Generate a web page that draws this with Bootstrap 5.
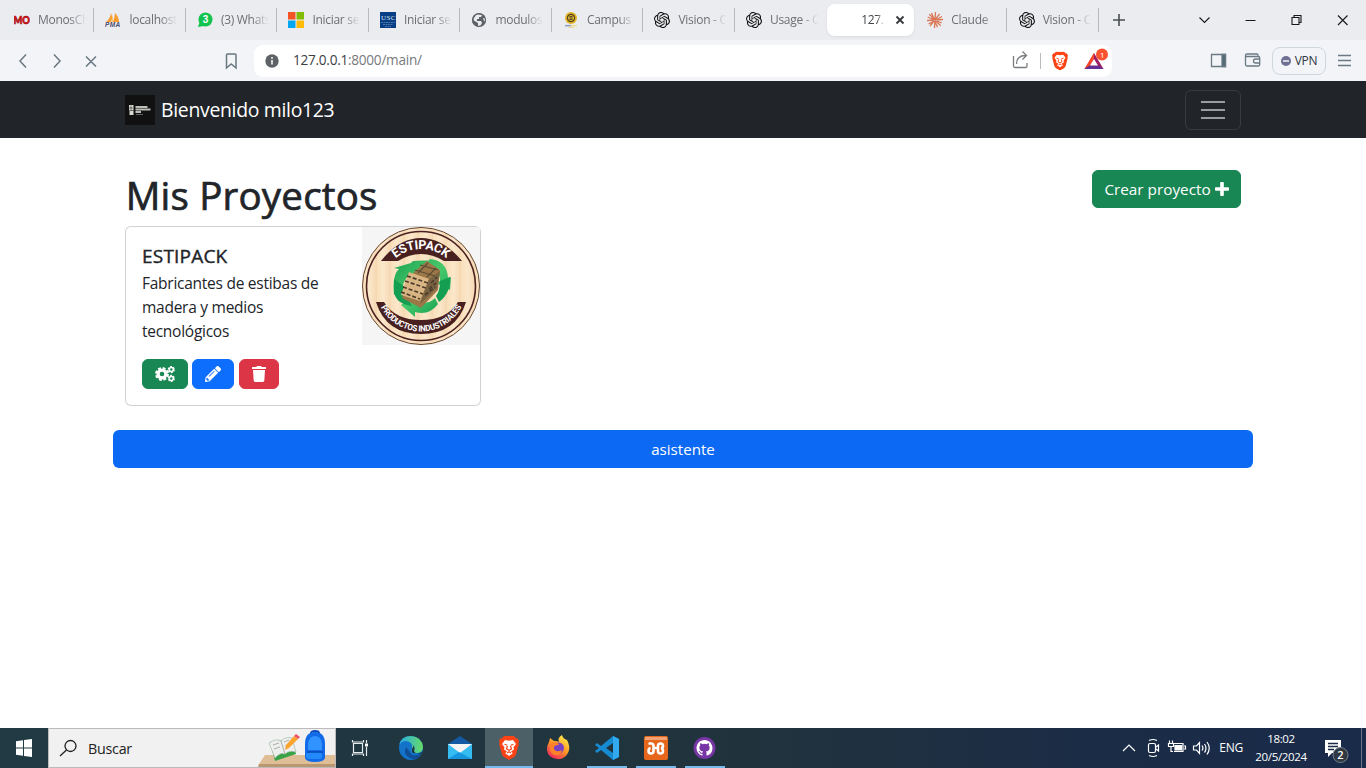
<!DOCTYPE html>
<html lang="es">
<head>
<meta charset="utf-8">
<meta name="viewport" content="width=device-width, initial-scale=1">
<title>Mis Proyectos</title>
<link href="https://cdn.jsdelivr.net/npm/bootstrap@5.3.0/dist/css/bootstrap.min.css" rel="stylesheet">
<script src="https://cdn.jsdelivr.net/npm/bootstrap@5.3.0/dist/js/bootstrap.bundle.min.js" defer></script>
<style>
html,body{height:768px;overflow:hidden}
body{font-family:"Open Sans","Noto Sans",sans-serif;letter-spacing:-.26px}
svg{display:block;flex:none}
.tabstrip{height:40px;background:#ebecf0;padding-left:2.6px}
.tab{flex:none;width:91.5px;height:32px;padding-left:11.4px;font-size:12px;color:#6d6f73;position:relative;letter-spacing:-.3px}
.tab.sep::before{content:"";position:absolute;right:0;top:4px;height:24px;width:1px;background:#b9babd}
.tab .lbl{width:48px;margin-left:8px;overflow:hidden;white-space:nowrap;-webkit-mask-image:linear-gradient(90deg,#000 65%,transparent);mask-image:linear-gradient(90deg,#000 65%,transparent)}
.tab.current{width:87px;margin:0 1.7px 0 1.1px;background:#fff;border-radius:8px;color:#414447;padding-left:34px;box-shadow:0 1px 3px #0001}
.tab.current .lbl{width:24px;margin-left:0}
.toolbar{height:41px;background:#f2f4f7;color:#6a7781}
.address{width:858px;height:32px;background:#fff;border-radius:9px;padding:0 3px 0 10px;font-size:13.6px;color:#777a7d}
.address b{font-weight:400;color:#3c4043}
.addrtext{margin-left:13px}
.vpn{flex:none;width:54px;height:28px;border:1px solid #d0d8de;border-radius:8px;font-size:12px;color:#303443;letter-spacing:-.3px}
.topnav{height:57px;background:#212529}
.topnav .navbar-brand{font-size:19.4px;gap:6px;letter-spacing:-.3px}
.topnav .navbar-toggler{border-color:#383c40;width:56px;height:40px;padding:4px 12px}
.heading{font-size:38.5px;line-height:48px;padding:1px 0 0 .7px;height:48px;letter-spacing:.2px;-webkit-text-stroke:.7px #212529}
.proj{height:180px}
.proj h5{font-size:19px;line-height:24px;letter-spacing:.2px;padding-top:1px;margin-bottom:3px;-webkit-text-stroke:.4px #212529}
.proj p{font-size:15.5px;line-height:24px}
.acts{gap:4.4px}
.ib{height:30px;padding:0 12px}
.create{width:149px;height:38px;font-size:15.3px;gap:4px}
.asis{width:1140px;background:#0b69f3;height:38px;color:#fff;font-size:15.1px}
.desk{height:40px;background:linear-gradient(90deg,#213a43 0,#20333d 55%,#1b2c46 80%,#192b49)}
.find{width:288px;background:#f1f1f1;border:1px solid #bbb;color:#222;font-size:14.3px}
.find span{padding:1px 0 0 1px}
.app{width:48px;height:40px;margin-right:1px;position:relative}
.apps{margin-left:3px}
.app.open::after{content:"";position:absolute;bottom:0;left:4px;width:40px;height:2px;background:#76b9ed}
.app.front{background:#4b6067}.app.front::after{left:0;width:48px}
.tray{color:#fff;font-size:12px}
.eng{margin:0 12px 0 1px}
.clock{width:52px;line-height:18px;text-align:center;font-size:11.5px;letter-spacing:-.35px;white-space:nowrap}
</style>
</head>
<body class="d-flex flex-column bg-white">
<svg width="0" height="0" class="position-absolute">
<defs>
<symbol id="knot" viewBox="0 0 24 24"><path fill="#111" d="M22.2819 9.8211a5.9847 5.9847 0 0 0-.5157-4.9108 6.0462 6.0462 0 0 0-6.5098-2.9A6.0651 6.0651 0 0 0 4.9807 4.1818a5.9847 5.9847 0 0 0-3.9977 2.9 6.0462 6.0462 0 0 0 .7427 7.0966 5.98 5.98 0 0 0 .511 4.9107 6.051 6.051 0 0 0 6.5146 2.9001A5.9847 5.9847 0 0 0 13.2599 24a6.0557 6.0557 0 0 0 5.7718-4.2058 5.9894 5.9894 0 0 0 3.9977-2.9001 6.0557 6.0557 0 0 0-.7475-7.0729zm-9.022 12.6081a4.4755 4.4755 0 0 1-2.8764-1.0408l.1419-.0804 4.7783-2.7582a.7948.7948 0 0 0 .3927-.6813v-6.7369l2.02 1.1686a.071.071 0 0 1 .038.052v5.5826a4.504 4.504 0 0 1-4.4945 4.4944zm-9.6607-4.1254a4.4708 4.4708 0 0 1-.5346-3.0137l.142.0852 4.783 2.7582a.7712.7712 0 0 0 .7806 0l5.8428-3.3685v2.3324a.0804.0804 0 0 1-.0332.0615L9.74 19.9502a4.4992 4.4992 0 0 1-6.1408-1.6464zM2.3408 7.8956a4.485 4.485 0 0 1 2.3655-1.9728V11.6a.7664.7664 0 0 0 .3879.6765l5.8144 3.3543-2.0201 1.1685a.0757.0757 0 0 1-.071 0l-4.8303-2.7865A4.504 4.504 0 0 1 2.3408 7.872zm16.5963 3.8558L13.1038 8.364 15.1192 7.2a.0757.0757 0 0 1 .071 0l4.8303 2.7913a4.4944 4.4944 0 0 1-.6765 8.1042v-5.6772a.79.79 0 0 0-.407-.667zm2.0107-3.0231l-.142-.0852-4.7735-2.7818a.7759.7759 0 0 0-.7854 0L9.409 9.2297V6.8974a.0662.0662 0 0 1 .0284-.0615l4.8303-2.7866a4.4992 4.4992 0 0 1 6.6802 4.66zM8.3065 12.863l-2.02-1.1638a.0804.0804 0 0 1-.038-.0567V6.0742a4.4992 4.4992 0 0 1 7.3757-3.4537l-.142.0805L8.704 5.459a.7948.7948 0 0 0-.3927.6813zm1.0976-2.3654l2.602-1.4998 2.6069 1.4998v2.9994l-2.5974 1.4997-2.6067-1.4997Z"/></symbol>
<symbol id="lion" viewBox="0 0 20 24"><path fill="#fb4316" d="M5 0h10l2.2 2.4 1.4-.2L20 5l-.6 2 .4 1.2L17 18.5q-.6 1.5-2 2.5l-5 3-5-3q-1.400-1-2-2.500L.2 8.200.600 7 0 5l1.400-2.800 1.400.200z"/><path fill="#fff" d="M6 4l4 .8 4-.8 3 4-2.500 3.300.500 2.200-3 2 1.800 1.800L10 20l-3.800-2.700L8 15.500l-3-2 .500-2.200L3 8z"/><path d="M5.500 8.300l2.800.900M14.500 8.300l-2.800.900M8.500 10l-1 3 2.500 1.300 2.500-1.300-1-3M8 17l2-1.200L12 17" stroke="#fb4316" stroke-width="1.200" fill="none"/></symbol>
</defs></svg>

<header>
<div class="tabstrip d-flex align-items-center">
 <div class="tab sep d-flex align-items-center"><svg width="16" height="16"><text x="-.5" y="12" font-family="Lato" font-weight="900" font-size="11" textLength="16" lengthAdjust="spacingAndGlyphs" fill="#e01317" stroke="#a51214" stroke-width=".7">MO</text></svg><span class="lbl">MonosCh</span></div>
 <div class="tab sep d-flex align-items-center"><svg width="16" height="16"><path d="M1 10Q5 7 6 1q2 4 1 9zM8 10q2-5 2-9 4 4 4 9z" fill="#f89c2c"/><path d="M5 10q2-3 3-7v7z" fill="#fbc275"/><text x="0" y="14.500" font-family="Liberation Sans" font-weight="700" font-style="italic" font-size="6.500" textLength="15" fill="#4c4c70">PMA</text></svg><span class="lbl">localhost</span></div>
 <div class="tab sep d-flex align-items-center"><svg width="16" height="16"><circle cx="8.500" cy="7.500" r="7" fill="#12c350"/><path d="M1 15l2-6 4 5z" fill="#12c350"/><text x="5.800" y="11.200" font-size="10" font-weight="700" fill="#fff" font-family="Liberation Sans">3</text></svg><span class="lbl">(3) Whats</span></div>
 <div class="tab sep d-flex align-items-center"><svg width="16" height="16"><path fill="#f35325" d="M0 0h7.500v7.500H0z"/><path fill="#81bc06" d="M8.500 0H16v7.500H8.500z"/><path fill="#05a6f0" d="M0 8.500h7.500V16H0z"/><path fill="#ffba08" d="M8.500 8.500H16V16H8.500z"/></svg><span class="lbl">Iniciar se</span></div>
 <div class="tab sep d-flex align-items-center"><svg width="16" height="16"><rect width="16" height="16" fill="#063e85"/><text x="1" y="8" font-size="7" textLength="14" fill="#dce6f3" font-family="Liberation Serif">USC</text><path d="M1 10.500h14M3 12.500h10M5 14.500h6" stroke="#5983b4" stroke-width=".8" stroke-dasharray="2 .5"/></svg><span class="lbl">Iniciar se</span></div>
 <div class="tab sep d-flex align-items-center"><svg width="16" height="16"><circle cx="8" cy="8" r="6.700" fill="#5f6368"/><path d="M7 2.500l4 .500-1 2H8v2H6v2h4l1 2-1.500 2.500L7 14v-3L2.500 8.200 3 6l2-3zM12 6l2.500.500v3L13 9z" fill="#ebecf0"/><circle cx="8" cy="8" r="6.500" fill="none" stroke="#5f6368" stroke-width="1.200"/></svg><span class="lbl">modulos</span></div>
 <div class="tab sep d-flex align-items-center"><svg width="16" height="16"><circle cx="8" cy="6" r="6" fill="#e4b526"/><circle cx="8" cy="6" r="4.200" fill="#51431f"/><circle cx="8" cy="6" r="2.600" fill="none" stroke="#e0b02e"/><path d="M5 6h6" stroke="#eac74c"/><path d="M2 13.700h6" stroke="#8aa2c6" stroke-width="1.600"/><path d="M8 13.700h6M5 15.500h6" stroke="#eddd9b" stroke-width="1.500"/></svg><span class="lbl">Campus</span></div>
 <div class="tab sep d-flex align-items-center"><svg width="16" height="16"><use href="#knot"/></svg><span class="lbl">Vision - O</span></div>
 <div class="tab d-flex align-items-center"><svg width="16" height="16"><use href="#knot"/></svg><span class="lbl">Usage - O</span></div>
 <div class="tab current d-flex align-items-center"><span class="lbl">127.</span><svg class="ms-auto me-2" width="12" height="12"><path d="M2.500 2.500l7 7m0-7l-7 7" stroke="#35383b" stroke-width="1.800"/></svg></div>
 <div class="tab sep d-flex align-items-center"><svg width="16" height="16" stroke="#d97757" stroke-width="1.300"><path d="M8.500 0L7.500 16M0 8.500L16 7.500M2.300 2.300l11.400 11.400M12.700 1.800L3 14M4.500 1l6 14.300M.700 5l14 6M15 4.500L1.500 12"/></svg><span class="lbl">Claude</span></div>
 <div class="tab sep d-flex align-items-center"><svg width="16" height="16"><use href="#knot"/></svg><span class="lbl">Vision - O</span></div>
 <svg width="266" height="40" fill="none" stroke="#16181a"><path d="M14 20h12M20 14v12" stroke="#4a4d50" stroke-width="1.600"/><path d="M100.500 17.500l5 5 5-5" stroke-width="1.100"/><path d="M146.500 20.500h10"/><path d="M193 17.500h7v7h-7zM195 17v-1.500h7v7H200.500" stroke-width="1.100"/><path d="M239 15.500l9.500 9.500m0-9.500L239 25" stroke-width="1.100"/></svg>
</div>
<div class="toolbar d-flex align-items-center">
 <svg width="254" height="40" fill="none" stroke="#687780" stroke-width="1.500"><path d="M26 13.500L20 20l6 6.500M54 13.500l6 6.500-6 6.500M86 15.500l10 10m0-10l-10 10M226.500 14q0-1 1-1h7.500q1 0 1 1v13l-4.800-4-4.700 4z"/></svg>
 <div class="address d-flex align-items-center"><svg width="16" height="16"><circle cx="8" cy="8" r="6.700" fill="#5f6368"/><path d="M8 7v4.500M8 4v1.700" stroke="#fff" stroke-width="1.500"/></svg><span class="me-auto addrtext"><b>127.0.0.1</b>:8000/main/</span>
 <svg width="102" height="32"><path d="M6.500 11v10q0 1.500 1.500 1.500h11q1 0 1-1.500v-3M9.500 19q0-8.500 9-8.500M15.500 6.500l4 4-4 4" fill="none" stroke="#797c7f" stroke-width="1.300"/><path d="M33.500 8v16" stroke="#b9bbbd"/><svg x="45" y="6.500" width="16" height="19"><use href="#lion"/></svg><path d="M87 8l9.500 16h-19z" fill="#9e1f63"/><path d="M87 8l-9.500 16 5-3 4.500-7z" fill="#ff4724"/><path d="M77.500 24h19l-5-3.500h-9z" fill="#662d91"/><path d="M87 14l-4 6.500h8z" fill="#fff"/><circle cx="95" cy="9.500" r="6" fill="#fa5330"/><text x="93" y="12.500" font-size="8" fill="#fff" font-family="Open Sans">1</text></svg></div>
 <svg class="ms-auto" width="66" height="40"><g fill="none" stroke="#697a84" stroke-width="1.300"><path d="M5.500 13.500h14v12h-14z"/><path d="M16 13.500h3.500v12H16z" fill="#526a77"/><path d="M52 15.500V14q0-1-1-1H41q-1.500 0-1.500 1.500v9q0 1.500 1.500 1.500h11.500q1.200 0 1.200-1.500v-6.800q0-1.200-1.200-1.200h-13M54 18h-4.500q-2 0-2 2t2 2H54"/></g></svg>
 <div class="vpn d-flex align-items-center justify-content-center"><svg class="me-1" width="10" height="10"><circle cx="5" cy="5" r="5" fill="#6d7092"/><path d="M2 5h6" stroke="#fff" stroke-width="1.400"/></svg>VPN</div>
 <svg width="40" height="40"><path d="M12 14.500h13M12 19.500h13M12 24.500h13" stroke="#697a84" stroke-width="1.300"/></svg>
</div>
</header>

<nav class="navbar navbar-dark topnav p-0">
 <div class="container"><a class="navbar-brand d-flex align-items-center p-0 m-0" href="#"><svg width="30" height="30"><rect width="30" height="30" fill="#111"/><path d="M4 10h4.500v5.500H4zM4.500 16h4v4h-4z" fill="#d8d8d0"/><path d="M6 10.500v5M4 13h4" stroke="#333" stroke-width=".6"/><path d="M10.500 12h12M10.500 14.500h15M10.500 17h5.500" stroke="#bdbdb8" stroke-width="1.800"/><path d="M11 19.500h7" stroke="#777" stroke-width=".8"/></svg><span>Bienvenido milo123</span></a>
 <button class="navbar-toggler" aria-label="Menú"><svg width="30" height="30" viewBox="0 0 30 30"><path d="M3 7h24M3 15h24M3 23h24" stroke="#9b9d9e" stroke-width="2"/></svg></button></div>
</nav>

<main class="container flex-grow-1">
 <div class="d-flex justify-content-between mt-4 pt-2">
  <h1 class="heading mb-2">Mis Proyectos</h1>
  <button class="btn btn-success create p-0 d-flex align-items-center justify-content-center"><span>Crear proyecto</span><svg width="14" height="16" viewBox="0 0 448 512"><path fill="#fff" d="M416 198H282V64c0-17.670-14.330-32-32-32h-52c-17.670 0-32 14.330-32 32v134H32c-17.670 0-32 14.330-32 32v52c0 17.670 14.330 32 32 32h134v134c0 17.670 14.330 32 32 32h52c17.670 0 32-14.330 32-32V314h134c17.670 0 32-14.330 32-32v-52c0-17.670-14.330-32-32-32z"/></svg></button>
 </div>
 <div class="row"><div class="col-4"><div class="card proj"><div class="row g-0">
  <div class="col-8"><div class="card-body">
   <h5 class="card-title">ESTIPACK</h5>
   <p class="card-text mb-3">Fabricantes de estibas de<br>madera y medios<br>tecnológicos</p>
   <div class="d-flex acts">
    <button class="btn btn-success ib"><svg width="20" height="16"><g fill="none" stroke="#fff"><circle cx="7" cy="8" r="3.900" stroke-width="3.200"/><circle cx="7" cy="8" r="5.900" stroke-width="2.100" stroke-dasharray="2.900 1.730"/><circle cx="16.300" cy="3.600" r="2" stroke-width="1.500"/><circle cx="16.300" cy="3.600" r="3" stroke-width="1.200" stroke-dasharray="1.900 1.240"/><circle cx="16.300" cy="12.400" r="2" stroke-width="1.500"/><circle cx="16.300" cy="12.400" r="3" stroke-width="1.200" stroke-dasharray="1.900 1.240"/></g></svg></button>
    <button class="btn btn-primary ib"><svg width="16" height="16" viewBox="0 0 512 512"><path fill="#fff" d="M497.900 142.100l-46.100 46.100c-4.700 4.700-12.300 4.700-17 0l-111-111c-4.700-4.700-4.700-12.300 0-17l46.100-46.100c18.700-18.700 49.100-18.700 67.900 0l60.100 60.100c18.800 18.700 18.800 49.100 0 67.900zM284.200 99.800L21.600 362.400.4 483.900c-2.900 16.400 11.400 30.600 27.800 27.800l121.500-21.300 262.600-262.600c4.700-4.700 4.700-12.300 0-17l-111-111c-4.800-4.700-12.400-4.700-17.100 0zM124.100 339.900c-5.500-5.500-5.500-14.300 0-19.800l154-154c5.500-5.500 14.300-5.500 19.800 0s5.500 14.300 0 19.800l-154 154c-5.500 5.500-14.300 5.500-19.800 0zM88 424h48v36.300l-64.500 11.300-31.100-31.100L51.700 376H88v48z"/></svg></button>
    <button class="btn btn-danger ib"><svg width="14" height="16" viewBox="0 0 448 512"><path fill="#fff" d="M432 32H312l-9.400-18.700A24 24 0 0 0 281.100 0H166.800a23.720 23.720 0 0 0-21.400 13.300L136 32H16A16 16 0 0 0 0 48v32a16 16 0 0 0 16 16h416a16 16 0 0 0 16-16V48a16 16 0 0 0-16-16zM53.200 467a48 48 0 0 0 47.900 45h245.800a48 48 0 0 0 47.900-45L416 128H32z"/></svg></button>
   </div></div></div>
  <div class="col-4"><svg width="118" height="118" viewBox="0 0 118 118">
   <defs><linearGradient id="wood" x2=".12" spreadMethod="repeat"><stop stop-color="#f9dfba"/><stop offset=".5" stop-color="#fbe7ca"/><stop offset="1" stop-color="#f5d8b2"/></linearGradient><path id="arcT" d="M20 61a39 39 0 0 1 78 0"/><path id="arcB" d="M13.500 59a45.500 45.500 0 0 0 91 0"/><linearGradient id="leaf" x2="1" y2="1"><stop stop-color="#1ea553"/><stop offset=".5" stop-color="#47c86b"/><stop offset="1" stop-color="#07964a"/></linearGradient></defs>
   <rect width="118" height="118" fill="#f5f5f5"/><circle cx="59" cy="59" r="58.500" fill="url(#wood)" stroke="#68442f"/><circle cx="59" cy="59" r="54.500" fill="none" stroke="#4b2020" stroke-width="1.600"/>
   <path d="M19 34Q37 11 59 11t41 23H82Q59 20 36 34zM14 75h8q11 18 37 18t37-18h8q-10 32-45 32T14 75z" fill="#482020"/>
   <text font-family="Roboto" font-weight="700" font-size="12.500" fill="#fff"><textPath href="#arcT" startOffset="27.500%" textLength="55">ESTIPACK</textPath></text>
   <text font-family="Roboto" font-weight="700" font-size="8.500" fill="#fff"><textPath href="#arcB" startOffset="15.500%" textLength="99" lengthAdjust="spacingAndGlyphs">PRODUCTOS INDUSTRIALES</textPath></text>
   <path d="M42 42l9-8 22-1 10 7 2 5-12 7-17-3-9 5zM32 68q-2-20 5-26l-5-1 17-5 5 15-6-3q-8 5-8 18zM39 78l14-10v7q14 3 20-4l3 6q-9 12-23 8v5zM88 63l-14-7 4-2q0-12-9-16l-2-6q18 1 19 19l3-1z" fill="url(#leaf)"/><path d="M32 65V52l11 8q2 12 7 19-16-2-18-14zM88 50l-10 4q0 10-4 15l3 6q12-9 11-25z" fill="#139e51"/>
   <path d="M52 45l13-11 13 9-2 20-17 18-19-10z" fill="#9c7849"/><path d="M47 45l20 7-9 22-19-6z" fill="#d9b583"/><path d="M67 52l11-8-3 17-17 16z" fill="#796343"/><path d="M45 49l21 7M43 54l21 7M41 60l20 7M39 65l19 7M69 56l6-6M67 62l7-6M63 68l10-8" stroke="#4d3b2b" stroke-width="1.700" stroke-dasharray="4 2"/><path d="M53 43l20 6M58 38l18 5M66 36l-10 10M74 41l-9 9" stroke="#5a4a33" stroke-width="1.100"/>
  </svg></div>
 </div></div></div></div>
 <div class="row mt-4"><button class="btn asis p-0">asistente</button></div>
</main>

<footer class="desk d-flex align-items-center">
 <svg width="48" height="40"><path d="M16 13.200l7-1v7.300h-7zM24 12l8-1v8.500h-8zM16 20.500h7v7.300l-7-1zM24 20.500h8V29l-8-1z" fill="#fff"/></svg>
 <div class="find h-100 d-flex align-items-center"><svg width="38" height="38" fill="none" stroke="#202020" stroke-width="1.300"><circle cx="21.500" cy="17" r="5.500"/><path d="M17.500 21L11 27"/></svg><span class="me-auto">Buscar</span>
 <svg width="77" height="38"><path d="M7 26h70v9H1z" fill="#dfbd96"/><path d="M1 35h76v3H0z" fill="#b99770"/><path d="M12 13l5 19 21-7-4-15z" fill="#38a246"/><path d="M11 14q7-5 12-2 5-5 11-3l4 14q-7-2-11 2-5-2-10 4z" fill="#eee" stroke="#a8bda7" stroke-width=".7"/><path d="M23 12l4 13M15 16l6-2M16 20l6-2M26 13l5-2M27 17l6-2" stroke="#a9b2a9"/><path d="M27 21l1-5 8-9 4 3-9 9z" fill="#fba42e"/><path d="M36 7l2-2 4 3-2 2z" fill="#ed5269"/><path d="M47 15q0-12 10-12t10 12v14q-1 4-10 4t-10-4z" fill="#116be9"/><path d="M53 4q0-2 4-2t4 2" fill="none" stroke="#0749b8" stroke-width="1.800"/><path d="M50 15q1-8 7-8t7 8v6H50z" fill="#3193ff"/><rect x="48" y="23" width="16" height="7" rx="3" fill="#238afa"/><path d="M49 23h16" stroke="#0749b8" stroke-width="1.500"/></svg></div>
 <svg width="48" height="40" fill="none" stroke="#e7ecee" stroke-width="1.200"><path d="M17.500 15.500h9v9h-9zM16.500 12v2h11v-2M16.500 28v-2h11v2M30.500 12v3M30.500 19v9"/><path d="M29 15.500h3v3h-3z" fill="#fff" stroke="none"/></svg>
 <div class="app apps"><svg width="48" height="40"><defs><linearGradient id="ed" x2="1"><stop stop-color="#25a9e9"/><stop offset="1" stop-color="#68dc65"/></linearGradient></defs><circle cx="24" cy="20" r="12" fill="#1273c9"/><path d="M12 17Q14 8 24 8q11 1 12 11 0 6-7 6-6 0-4-5 1-6-6-7-4 0-7 4z" fill="url(#ed)"/><path d="M19 19q-4 9 7 12 6 0 8-5-10 3-11-2z" fill="#104f96"/><path d="M24 16q4 1 1 5-1 5 4 4 4 1 5 1l2-2q-8 3-9-1 2-5-3-7z" fill="#20333d"/></svg></div>
 <div class="app"><svg width="48" height="40"><path d="M12 16l12-8 12 8v15H12z" fill="#1459a4"/><path d="M12 16h24v15H12z" fill="#f4f4f4"/><path d="M12 16l12 9 12-9v15H12z" fill="#35bdf2"/><path d="M23 24l13 7H12z" fill="#1697df"/></svg></div>
 <div class="app front open"><svg width="48" height="40"><svg x="14" y="8" width="20" height="24"><use href="#lion"/></svg></svg></div>
 <div class="app"><svg width="48" height="40"><defs><linearGradient id="fx" x1=".8" x2=".2" y2="1"><stop stop-color="#fff04a"/><stop offset=".5" stop-color="#ff9626"/><stop offset="1" stop-color="#f21c64"/></linearGradient></defs><path d="M15 14l1-4 4 3q4 0 5 1-2-4 3-7 1 4 5 5 4 7 1 13-4 7-11 6-9-1-10-9 0-5 2-8z" fill="url(#fx)"/><circle cx="24.500" cy="20" r="5.500" fill="#7741c6"/><path d="M17 15q7-2 8 2-6 0-5 4 2 4 8 1-1 6-7 5-5-1-5-7z" fill="#ff812a"/></svg></div>
 <div class="app open"><svg width="48" height="40"><path d="M30 8l6 3v18l-6 3-12-10-4 3-2-2 4-3-4-3 2-2 4 3z" fill="#168bd2"/><path d="M30 15v10l-7-5z" fill="#20333d"/><path d="M30 8l6 3v18l-6 3z" fill="#31aaf0"/></svg></div>
 <div class="app open"><svg width="48" height="40"><rect x="12" y="8" width="24" height="24" rx="2" fill="#e6671b"/><rect x="13" y="9" width="22" height="3" fill="#f0a273"/><path d="M16.500 15.500H19q2.500 0 2.500 2.500v2H26v-2q0-2.500 2.500-2.500T31 18q0 2-2 2.200 2 .3 2 2.800t-2.500 2.500T26 23v-3M21.500 20v3q0 2.500-2.500 2.500T16.500 23q0-2.500 2-3" fill="none" stroke="#fff" stroke-width="2.600"/></svg></div>
 <div class="app open"><svg width="48" height="40"><circle cx="23.500" cy="20" r="11" fill="#7735a6"/><g transform="translate(15.500 12)"><path fill="#fff" d="M8 0C3.580 0 0 3.580 0 8c0 3.540 2.290 6.530 5.470 7.590.4.070.55-.17.55-.38 0-.19-.01-.82-.01-1.490-2.010.37-2.530-.49-2.690-.94-.09-.23-.48-.94-.82-1.130-.28-.15-.68-.52-.01-.53.63-.01 1.080.58 1.230.82.72 1.210 1.870.87 2.330.66.07-.52.28-.87.51-1.070-1.780-.2-3.640-.89-3.640-3.950 0-.87.31-1.590.82-2.150-.08-.2-.36-1.020.08-2.120 0 0 .67-.21 2.200.82a7.500 7.500 0 0 1 4 0c1.530-1.040 2.200-.82 2.200-.82.44 1.100.16 1.920.08 2.120.51.560.82 1.270.82 2.150 0 3.070-1.870 3.750-3.650 3.950.29.25.54.73.54 1.480 0 1.070-.01 1.930-.01 2.200 0 .21.15.46.55.38A8.010 8.010 0 0 0 16 8c0-4.420-3.580-8-8-8z"/></g></svg></div>
 <div class="tray ms-auto h-100 d-flex align-items-center">
  <svg width="98" height="40" fill="none" stroke="#fff" stroke-width="1.200"><path d="M3 23l6-6 6 6"/><rect x="28.500" y="15.500" width="7" height="9" rx="1.500"/><path d="M36 19l2.500-2v6L36 21M29 12.500q4-2 8 0M29 27.500q4 2 8 0M54 15.500h9v8h-9M64 18h1.500v3H64"/><path d="M55 17.500h6.500v4.500H55z" fill="#fff"/><path d="M49.500 12.500v3M52.500 12.500v3M48.500 15.500h5v3h-5zM51 18.500v5h2M73.500 18h3l3-3.500v11l-3-3.500h-3zM82 17.500q2 2.500 0 5M84.500 16q3 4 0 8.500M87 14q4.500 6 0 12.500"/></svg>
  <span class="eng">ENG</span><div class="clock">18:02<br>20/5/2024</div>
  <svg width="59" height="40"><path d="M18 12h16v13h-9l-4 4v-4h-3z" fill="#fff"/><path d="M21 15.500h10M21 18.500h10M21 21.500h6" stroke="#1b2c46" stroke-width="1.300"/><circle cx="33.500" cy="27" r="7.500" fill="#303841" stroke="#77818d"/><text x="30.300" y="31" font-size="11" font-weight="600" fill="#fff" font-family="Open Sans">2</text><path d="M54.500 0v40" stroke="#687487"/></svg>
 </div>
</footer>
</body>
</html>
